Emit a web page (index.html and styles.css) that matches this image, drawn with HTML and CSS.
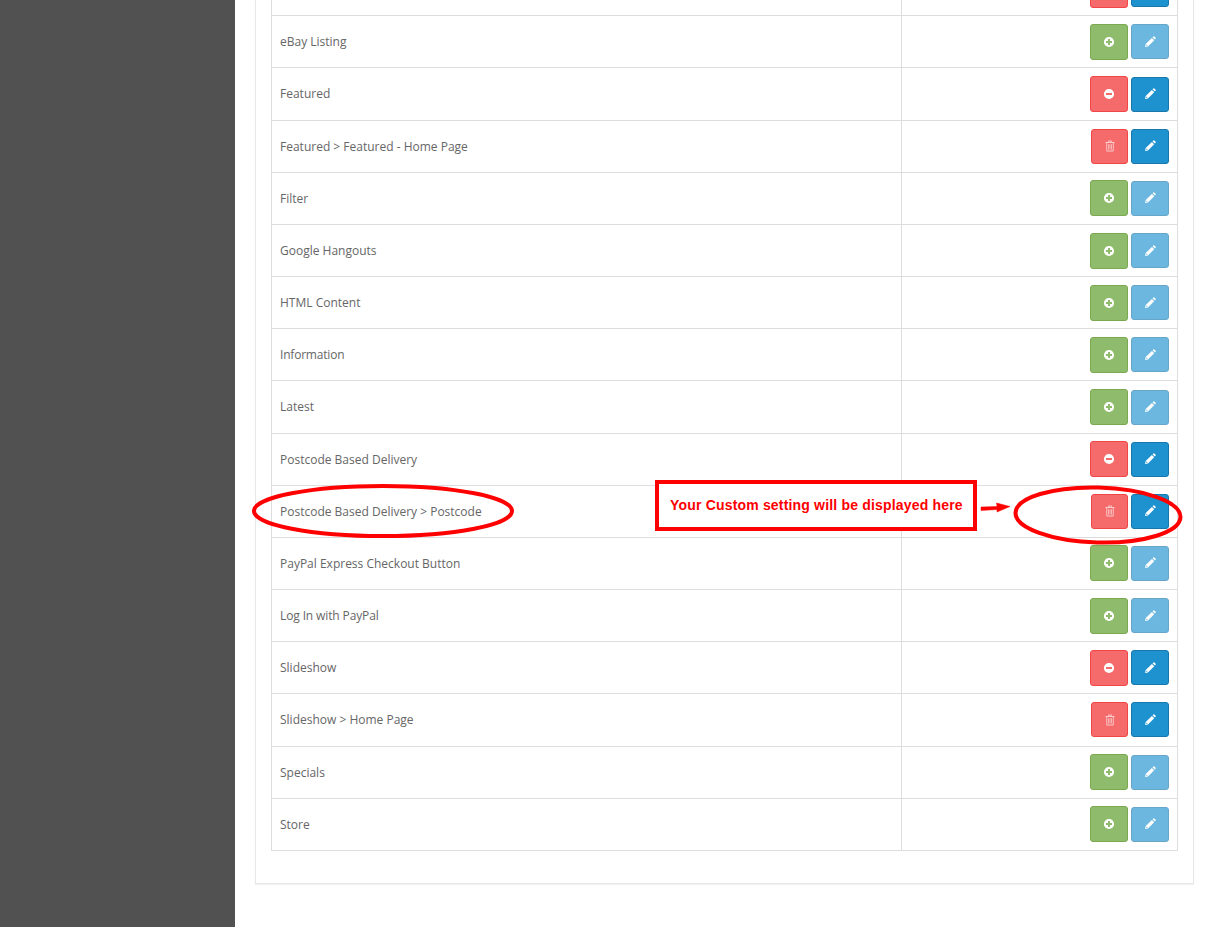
FILE: index.html
```html
<!DOCTYPE html>
<html lang="en">
<head>
<meta charset="utf-8">
<title>Modules</title>
<link rel="stylesheet" href="styles.css">
</head>
<body>
<svg width="0" height="0" class="defs">
  <symbol id="i-plus" viewBox="0 0 12 12"><path fill-rule="evenodd" d="M6 .9a5.100 5.100 0 1 0 0 10.200A5.100 5.100 0 0 0 6 .9ZM5 3h2v2h2v2H7v2H5V7H3V5h2Z"/></symbol>
  <symbol id="i-minus" viewBox="0 0 12 12"><path fill-rule="evenodd" d="M6 .9a5.100 5.100 0 1 0 0 10.200A5.100 5.100 0 0 0 6 .9ZM3 5h6v2H3Z"/></symbol>
  <symbol id="i-pencil" viewBox="0 0 12 12"><path fill-rule="evenodd" d="M7.900 1.900 10.200 4.200 4 10.400 1 11.100 1.700 8.100ZM2.600 8.500 2.200 9.900 3.700 9.500Z"/><path d="M8.500 1.300 9.400.4Q9.800 0 10.300.4L11.700 1.800Q12 2.200 11.700 2.600L10.800 3.600Z"/></symbol>
  <symbol id="i-trash" viewBox="0 0 12 12"><path fill-rule="evenodd" d="M4.500.5h3l.6 1.500h2.400v1h-.8v7.500c0 .5-.4 1-.9 1H3.200c-.5 0-.9-.5-.9-1V3H1.500V2h2.400ZM5 1.400l-.2.6h2.400L7 1.400ZM3.200 3v7.600h5.600V3ZM4 4.200h.8v5.200H4ZM5.600 4.200h.8v5.200h-.8ZM7.200 4.200H8v5.200h-.8Z"/></symbol>
</svg>
<div class="page">
  <aside class="sidebar"></aside>
  <main class="content">
    <section class="panel">
      <table class="modules">
        <tbody>
          <tr><td class="name"></td><td class="actions"><span class="btn red wide"></span><span class="btn blue"></span></td></tr>
          <tr><td class="name">eBay Listing</td><td class="actions"><a class="btn green wide"><svg class="ico"><use href="#i-plus"/></svg></a><a class="btn blue off"><svg class="ico"><use href="#i-pencil"/></svg></a></td></tr>
          <tr><td class="name">Featured</td><td class="actions"><a class="btn red wide"><svg class="ico"><use href="#i-minus"/></svg></a><a class="btn blue"><svg class="ico"><use href="#i-pencil"/></svg></a></td></tr>
          <tr><td class="name">Featured &gt; Featured - Home Page</td><td class="actions"><a class="btn red"><svg class="ico faint"><use href="#i-trash"/></svg></a><a class="btn blue"><svg class="ico"><use href="#i-pencil"/></svg></a></td></tr>
          <tr><td class="name">Filter</td><td class="actions"><a class="btn green wide"><svg class="ico"><use href="#i-plus"/></svg></a><a class="btn blue off"><svg class="ico"><use href="#i-pencil"/></svg></a></td></tr>
          <tr><td class="name">Google Hangouts</td><td class="actions"><a class="btn green wide"><svg class="ico"><use href="#i-plus"/></svg></a><a class="btn blue off"><svg class="ico"><use href="#i-pencil"/></svg></a></td></tr>
          <tr><td class="name">HTML Content</td><td class="actions"><a class="btn green wide"><svg class="ico"><use href="#i-plus"/></svg></a><a class="btn blue off"><svg class="ico"><use href="#i-pencil"/></svg></a></td></tr>
          <tr><td class="name tight">Information</td><td class="actions"><a class="btn green wide"><svg class="ico"><use href="#i-plus"/></svg></a><a class="btn blue off"><svg class="ico"><use href="#i-pencil"/></svg></a></td></tr>
          <tr><td class="name">Latest</td><td class="actions"><a class="btn green wide"><svg class="ico"><use href="#i-plus"/></svg></a><a class="btn blue off"><svg class="ico"><use href="#i-pencil"/></svg></a></td></tr>
          <tr><td class="name">Postcode Based Delivery</td><td class="actions"><a class="btn red wide"><svg class="ico"><use href="#i-minus"/></svg></a><a class="btn blue"><svg class="ico"><use href="#i-pencil"/></svg></a></td></tr>
          <tr><td class="name">Postcode Based Delivery &gt; Postcode</td><td class="actions"><a class="btn red"><svg class="ico faint"><use href="#i-trash"/></svg></a><a class="btn blue"><svg class="ico"><use href="#i-pencil"/></svg></a></td></tr>
          <tr><td class="name">PayPal Express Checkout Button</td><td class="actions"><a class="btn green wide"><svg class="ico"><use href="#i-plus"/></svg></a><a class="btn blue off"><svg class="ico"><use href="#i-pencil"/></svg></a></td></tr>
          <tr><td class="name snug">Log In with PayPal</td><td class="actions"><a class="btn green wide"><svg class="ico"><use href="#i-plus"/></svg></a><a class="btn blue off"><svg class="ico"><use href="#i-pencil"/></svg></a></td></tr>
          <tr><td class="name">Slideshow</td><td class="actions"><a class="btn red wide"><svg class="ico"><use href="#i-minus"/></svg></a><a class="btn blue"><svg class="ico"><use href="#i-pencil"/></svg></a></td></tr>
          <tr><td class="name">Slideshow &gt; Home Page</td><td class="actions"><a class="btn red"><svg class="ico faint"><use href="#i-trash"/></svg></a><a class="btn blue"><svg class="ico"><use href="#i-pencil"/></svg></a></td></tr>
          <tr><td class="name">Specials</td><td class="actions"><a class="btn green wide"><svg class="ico"><use href="#i-plus"/></svg></a><a class="btn blue off"><svg class="ico"><use href="#i-pencil"/></svg></a></td></tr>
          <tr><td class="name">Store</td><td class="actions"><a class="btn green wide"><svg class="ico"><use href="#i-plus"/></svg></a><a class="btn blue off"><svg class="ico"><use href="#i-pencil"/></svg></a></td></tr>
        </tbody>
      </table>
    </section>
  </main>
</div>
<svg class="marks" width="1214" height="927" viewBox="0 0 1214 927">
  <ellipse cx="383" cy="511" rx="129" ry="25" class="ring"/>
  <ellipse cx="1098" cy="515" rx="82.500" ry="27.500" class="ring" transform="rotate(1.500 1098 515)"/>
  <path class="arrow" d="M981 507 L997 506.500 L996.500 503 L1010 506.500 L997 512 L997 509.500 L981 510.500Z"/>
</svg>
<div class="callout">Your Custom setting will be displayed here</div>
</body>
</html>
```
FILE: styles.css
```css
html, body {
  margin: 0;
  height: 927px;
  overflow: hidden;
  background: #fff;
}
body {
  font-family: "Open Sans", sans-serif;
  font-size: 12px;
  line-height: 1.42857;
  color: #666;
  position: relative;
}
.defs {
  position: absolute;
}
.page {
  display: flex;
  height: 927px;
  overflow: hidden;
}
.sidebar {
  flex: 0 0 235px;
  background: #515151;
}
.content {
  flex: 1;
  padding: 0 20px 0 20px;
  margin-top: -50.84px;
  min-width: 0;
}
.panel {
  border: 1px solid #e8e8e8;
  border-top: 0;
  padding: 15px 15px 32px;
  box-shadow: 0 1px 1px rgba(0, 0, 0, .05);
}
.modules {
  width: 907px;
  table-layout: fixed;
  border-collapse: separate;
  border-spacing: 0;
  border: 1px solid #ddd;
  border-top: 0;
  border-bottom: 0;
}
.modules td {
  border-bottom: 1px solid #ddd;
  padding: 0 8px;
  height: 52.16px;
  box-sizing: border-box;
  vertical-align: middle;
}
.modules .name {
  width: 630px;
  border-right: 1px solid #ddd;
}
.tight {
  letter-spacing: -.2px;
}
.snug {
  letter-spacing: -.12px;
}
.actions {
  white-space: nowrap;
  text-align: right;
  font-size: 0;
}
.btn {
  display: inline-flex;
  align-items: center;
  justify-content: center;
  box-sizing: border-box;
  width: 38px;
  height: 35px;
  margin-left: 3px;
  vertical-align: middle;
  border: 1px solid;
  border-radius: 3px;
}
.wide {
  height: 36px;
}
.red:not(.wide) {
  width: 37px;
}
.red {
  background: #f56b6b;
  border-color: #f24545;
}
.green {
  background: #8fbb6c;
  border-color: #7aa94f;
}
.blue {
  background: #1e91cf;
  border-color: #1978ab;
}
.off {
  opacity: .65;
}
.ico {
  width: 12px;
  height: 12px;
  fill: #fff;
}
.faint {
  opacity: .65;
}
.marks {
  position: absolute;
  left: 0;
  top: 0;
  pointer-events: none;
}
.ring {
  fill: none;
  stroke: #f00;
  stroke-width: 4;
}
.arrow {
  fill: #f00;
  stroke: #f00;
  stroke-width: .5;
}
.callout {
  position: absolute;
  left: 655px;
  top: 480px;
  box-sizing: border-box;
  width: 322px;
  height: 51px;
  border: 4px solid #f00;
  background: #fff;
  color: #f00;
  font-family: "Liberation Sans", Arial, sans-serif;
  font-weight: 700;
  font-size: 14px;
  line-height: 43px;
  letter-spacing: .18px;
  padding-left: 11px;
  white-space: nowrap;
}
```
